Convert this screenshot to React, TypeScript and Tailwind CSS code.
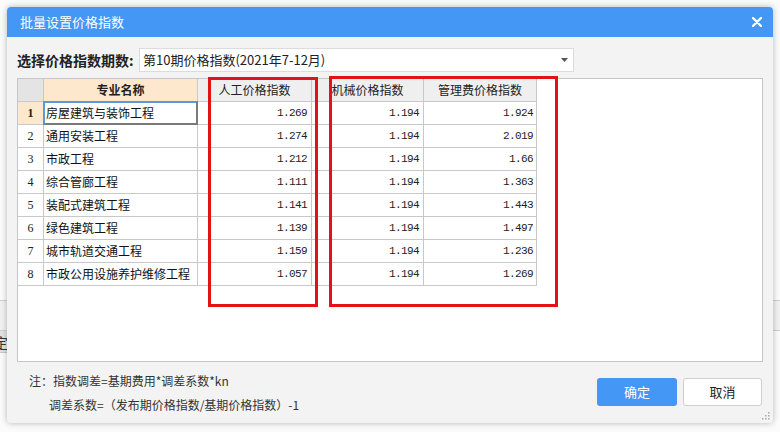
import React from "react";

interface Row {
  name: string;
  labor: string;
  machine: string;
  manage: string;
}

const ROWS: Row[] = [
  { name: "房屋建筑与装饰工程", labor: "1.269", machine: "1.194", manage: "1.924" },
  { name: "通用安装工程", labor: "1.274", machine: "1.194", manage: "2.019" },
  { name: "市政工程", labor: "1.212", machine: "1.194", manage: "1.66" },
  { name: "综合管廊工程", labor: "1.111", machine: "1.194", manage: "1.363" },
  { name: "装配式建筑工程", labor: "1.141", machine: "1.194", manage: "1.443" },
  { name: "绿色建筑工程", labor: "1.139", machine: "1.194", manage: "1.497" },
  { name: "城市轨道交通工程", labor: "1.159", machine: "1.194", manage: "1.236" },
  { name: "市政公用设施养护维修工程", labor: "1.057", machine: "1.194", manage: "1.269" },
];

const CJK = "font-['Microsoft_YaHei','Noto_Sans_CJK_SC',sans-serif]";
const NUM = "font-['Liberation_Mono','Noto_Sans_CJK_SC',monospace] text-[11px] tracking-[-0.6px]";
const COLS = "grid grid-cols-[26px_154px_114px_112px_113px]";
const CELL = "h-[23px] border-r border-b border-[#c8c8c8] flex items-center";

export default function App() {
  return (
    <div className={`relative w-[780px] h-[432px] overflow-hidden bg-[#fbfbfb] ${CJK}`}>
      {/* page behind the dialog */}
      <div className="absolute left-0 right-0 top-[300px] h-[31px] border-t border-b border-[#cfcfcf] bg-[#f1f1f1]" />
      <div className="absolute left-0 top-[331px] w-[8px] h-[22px] bg-[#e2e2e2] border-b border-[#c9c9c9] overflow-hidden">
        <span className="absolute left-[-6px] top-[1px] text-[14px] leading-[20px] text-[#333]">定</span>
      </div>

      {/* dialog window */}
      <div className="absolute left-[7px] top-[7px] w-[766px] h-[416px] rounded-[4px] bg-[#f3f3f3] shadow-[0_0_6px_rgba(0,0,0,0.28)] overflow-hidden flex flex-col">
        <div className="h-[30px] shrink-0 bg-[#4497f5] flex items-center justify-between pl-[13px] pr-[11px]">
          <span className="text-[13px] text-white">批量设置价格指数</span>
          <svg width="10" height="10" viewBox="0 0 10 10">
            <path d="M1 1 L9 9 M9 1 L1 9" stroke="#fff" strokeWidth="2.4" strokeLinecap="round" />
          </svg>
        </div>

        <div className="flex-1 flex flex-col px-[10px]">
          {/* period select */}
          <div className="mt-[11px] h-[24px] flex items-center">
            <span className="text-[14px] font-bold text-[#222] w-[122px]">选择价格指数期数:</span>
            <div className="w-[435px] h-[24px] bg-white border border-[#dcdcdc] flex items-center justify-between pl-[3px] pr-[5px]">
              <span className="text-[13px] text-[#222]">第10期价格指数(2021年7-12月)</span>
              <svg width="7" height="4" viewBox="0 0 7 4">
                <path d="M0 0 L7 0 L3.5 4 Z" fill="#555" />
              </svg>
            </div>
          </div>

          {/* grid panel */}
          <div className="relative mt-[6px] h-[284px] bg-white border border-[#c6c6c6]">
            <div className={COLS}>
              <div className={`${CELL} bg-[#e4e4e4]`} />
              <div className={`${CELL} bg-[#fde8cd] justify-center text-[12px] font-bold text-[#222]`}>专业名称</div>
              <div className={`${CELL} bg-[#efefef] justify-center text-[12px] text-[#222]`}>人工价格指数</div>
              <div className={`${CELL} bg-[#efefef] justify-center text-[12px] text-[#222]`}>机械价格指数</div>
              <div className={`${CELL} bg-[#efefef] justify-center text-[12px] text-[#222]`}>管理费价格指数</div>
            </div>
            {ROWS.map((r, i) => (
              <div key={r.name} className={COLS}>
                <div
                  className={`${CELL} justify-center font-['Liberation_Serif',serif] text-[12px] text-[#222] ${
                    i === 0 ? "bg-[#fde8cd] font-bold" : "bg-white"
                  }`}
                >
                  {i + 1}
                </div>
                <div className={`${CELL} relative pl-[2px] text-[12px] text-[#111]`}>
                  {r.name}
                  {i === 0 && (
                    <div className="absolute left-[-1px] top-[-1px] right-[-1px] bottom-[-1px] border-2 border-t-[#5b9ad8] border-l-[#5b9ad8] border-r-[#7a7a7a] border-b-[#7a7a7a]" />
                  )}
                </div>
                <div className={`${CELL} justify-end pr-[4px] ${NUM} text-[#222]`}>{r.labor}</div>
                <div className={`${CELL} justify-end pr-[4px] ${NUM} text-[#222]`}>{r.machine}</div>
                <div className={`${CELL} justify-end pr-[3px] ${NUM} text-[#222]`}>{r.manage}</div>
              </div>
            ))}

            {/* red annotation boxes */}
            <div className="absolute left-[190px] top-[-2px] w-[110px] h-[230px] border-[3px] border-[#e3121a]" />
            <div className="absolute left-[311px] top-[-3px] w-[229px] h-[231px] border-[3px] border-[#e3121a]" />
          </div>

          {/* notes + buttons */}
          <div className="flex-1 flex items-start justify-between">
            <div className="pl-[12px] pt-[7px] text-[12px] text-[#333] leading-[24px]">
              <div>注：指数调差=基期费用*调差系数*kn</div>
              <div className="pl-[20px]">调差系数=（发布期价格指数/基期价格指数）-1</div>
            </div>
            <div className="flex gap-[6px] pt-[16px] pr-[1px]">
              <button className="w-[80px] h-[28px] rounded-[3px] bg-[#4497f5] text-white text-[13px]">确定</button>
              <button className="w-[79px] h-[28px] rounded-[3px] bg-white border border-[#cfcfcf] text-[#222] text-[13px]">取消</button>
            </div>
          </div>
        </div>

        {/* resize grip */}
        <svg className="absolute right-[3px] bottom-[3px]" width="8" height="8" viewBox="0 0 8 8">
          <rect x="6" y="0" width="1.5" height="1.5" fill="#aaa" />
          <rect x="3" y="3" width="1.5" height="1.5" fill="#aaa" />
          <rect x="6" y="3" width="1.5" height="1.5" fill="#aaa" />
          <rect x="0" y="6" width="1.5" height="1.5" fill="#aaa" />
          <rect x="3" y="6" width="1.5" height="1.5" fill="#aaa" />
          <rect x="6" y="6" width="1.5" height="1.5" fill="#aaa" />
        </svg>
      </div>
    </div>
  );
}
